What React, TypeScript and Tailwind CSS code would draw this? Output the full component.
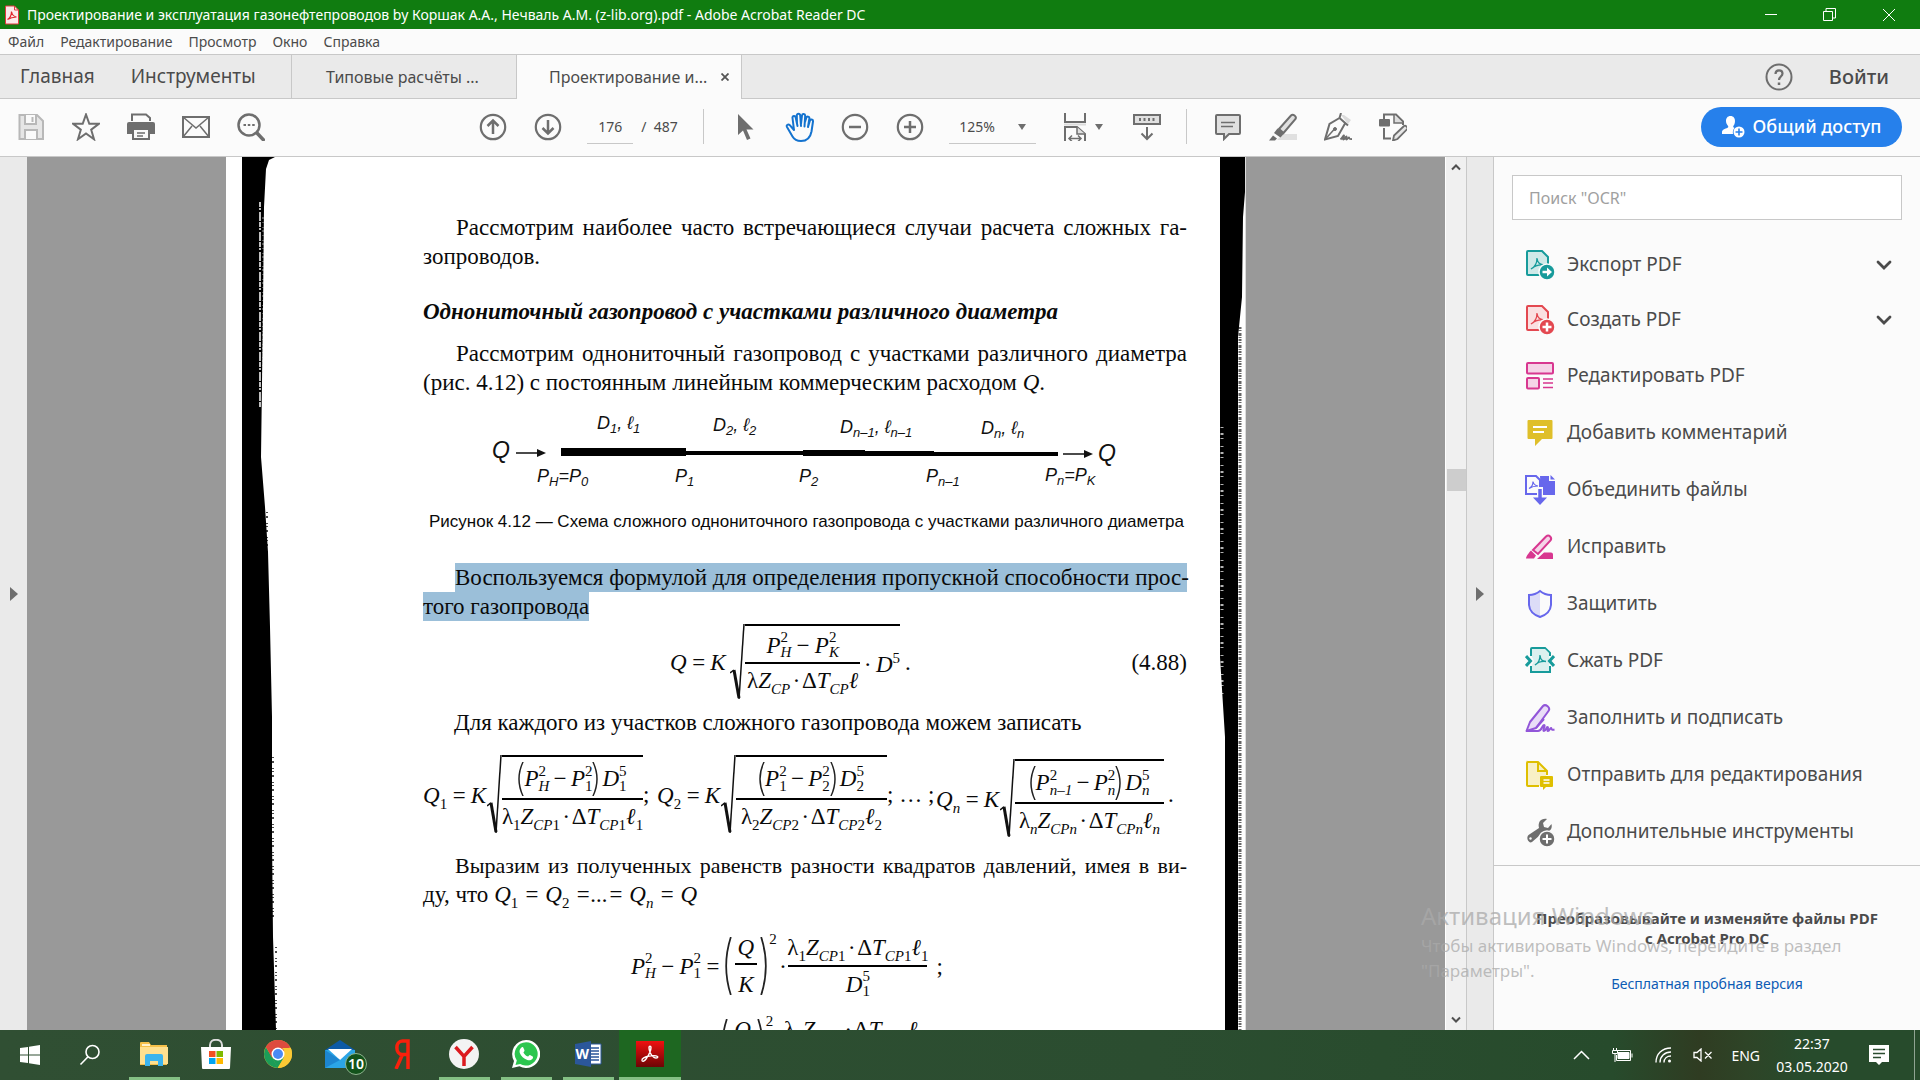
import React from "react";

type Kids = { children?: React.ReactNode };

/* ---------- Toolbar icons (28 x 28) ---------- */

function Ico({ children, size = 28 }: Kids & { size?: number }) {
  return (
    <svg width={size} height={size} viewBox="0 0 28 28" fill="none" stroke="#6e6e6e" strokeWidth="2" aria-hidden="true">
      {children}
    </svg>
  );
}

const SaveIcon = () => (
  <Ico>
    <g stroke="#b8b8b8">
      <path d="M2.500 2H20l6 6v18H2.500z" fill="#e6e6e6" />
      <path d="M8 2v9h11V2" fill="#fafafa" />
      <path d="M15.500 4v5M8 26v-9h12v9" fill="#fafafa" />
    </g>
  </Ico>
);
const StarIcon = () => (
  <Ico>
    <path d="M14 1.500l3.300 9.300h9.500l-7.600 5.900 2.800 9.500L14 20.500l-8 5.700 2.800-9.500-7.600-5.900h9.500z" strokeLinejoin="miter" />
  </Ico>
);
const PrintIcon = () => (
  <Ico>
    <path d="M5 8V1.500h14l4 3.500v3" />
    <path d="M2 9h24a2 2 0 012 2v10H0V11a2 2 0 012-2z" fill="#6e6e6e" stroke="none" />
    <path d="M6 16h16v10H6z" fill="#fafafa" />
    <path d="M10 20h8M10 23h6" strokeWidth="1.500" />
  </Ico>
);
const MailIcon = () => (
  <Ico>
    <path d="M1 4h26v20H1z" />
    <path d="M1 4l13 11L27 4M1 24l9-11M27 24l-9-11" strokeWidth="1.500" />
  </Ico>
);
const FindIcon = () => (
  <Ico>
    <circle cx="12" cy="12" r="10.500" strokeWidth="2.500" />
    <path d="M19.500 19.500L27.500 28" strokeWidth="3.500" />
    <path d="M6.500 12h2.500M10.800 12h2.500M15.200 12h2.500" />
  </Ico>
);
const UpIcon = () => (
  <Ico>
    <circle cx="14" cy="14" r="12.200" strokeWidth="2.200" />
    <path d="M14 21V8M8.500 13L14 7.500l5.500 5.500" strokeWidth="2.500" />
  </Ico>
);
const DownIcon = () => (
  <Ico>
    <circle cx="14" cy="14" r="12.200" strokeWidth="2.200" />
    <path d="M14 7v13M8.500 15l5.500 5.500 5.500-5.500" strokeWidth="2.500" />
  </Ico>
);
const MinusIcon = () => (
  <Ico>
    <circle cx="14" cy="14" r="12.200" strokeWidth="2.200" />
    <path d="M8 14h12" strokeWidth="2.500" />
  </Ico>
);
const PlusIcon = () => (
  <Ico>
    <circle cx="14" cy="14" r="12.200" strokeWidth="2.200" />
    <path d="M8 14h12M14 8v12" strokeWidth="2.500" />
  </Ico>
);
const PointerIcon = () => (
  <Ico>
    <path d="M7 1v21l5-4.500L16 27l3.500-1.500L15.500 16.500h7z" fill="#6e6e6e" stroke="none" />
  </Ico>
);
const HandIcon = () => (
  <svg width="30" height="30" viewBox="0 0 30 30" fill="none" stroke="#1473cf" strokeWidth="2" strokeLinecap="round" strokeLinejoin="round" aria-hidden="true">
    <path d="M9 18L4.800 13.200C3.200 11.500 1 13 2 15l5.500 9.500C9.500 28 12 29 16 29c6.500 0 9.500-4 10.500-9.500L28 9.500c.3-2.300-2.600-2.800-3.200-.6L23 15M9 18L7.500 6c-.3-2.300 2.700-2.700 3.200-.5L12.500 14M12 12l-.2-8.500c0-2.400 3.200-2.400 3.400 0L16 14M16 12l1-8.500c.3-2.200 3.200-2 3.200.3L19.500 14.500M20 10l1.300-4.200c.6-2 3.400-1.400 3.100.7L23 15" />
  </svg>
);
const FitIcon = () => (
  <Ico>
    <path d="M3 11.500h22" stroke="#dcdcdc" />
    <path d="M4 0v9h20V0M4 29V14h12l8 7v8" />
    <path d="M16 14v7h8" fill="#e0e0e0" strokeWidth="1.500" />
    <path d="M8.500 25.500h11M11 22.500l-3 3 3 3M17 22.500l3 3-3 3" strokeWidth="1.500" />
  </Ico>
);
const KeyboardIcon = () => (
  <Ico>
    <path d="M1 2h26v9H1z" fill="#e0e0e0" />
    <path d="M6 6.500h2M10.500 6.500h2M15 6.500h2M19.500 6.500h2" strokeWidth="3" />
    <path d="M14 14v12M8.500 20.500L14 26l5.500-5.500" />
  </Ico>
);
const CommentIcon = () => (
  <Ico>
    <path d="M3 2h22a1 1 0 011 1v17a1 1 0 01-1 1H15l-5 5v-5H3a1 1 0 01-1-1V3a1 1 0 011-1z" fill="#e0e0e0" />
    <path d="M7 9.500h14M7 13.500h12" strokeWidth="1.500" />
  </Ico>
);
const HighlightIcon = () => (
  <Ico>
    <path d="M8 27l6-6h14v6z" fill="#e0e0e0" stroke="none" />
    <path d="M10 16L22 2.500c2-2 6 .8 4.500 3.500L14.500 20z" fill="#e0e0e0" />
    <path d="M8.500 15.500l6.500 5-3.500 4-6.500-4.500z" fill="#6e6e6e" stroke="none" />
    <path d="M4 22.500l4 3-2 2H0z" fill="#6e6e6e" stroke="none" />
  </Ico>
);
const SignIcon = () => (
  <Ico>
    <path d="M17 2l7 9 3-4-7-5z" fill="#dcdcdc" stroke="none" />
    <path d="M17 0l-1.500 5L24 12.500M15.500 5L5.500 11 1 26.500 14 23l7-12.500" />
    <path d="M1.500 26l9-10" strokeWidth="1.500" />
    <circle cx="11" cy="16" r="1.500" fill="#6e6e6e" strokeWidth="1" />
    <path d="M16.500 26.500c2-2 3-4.500 3.500-4 .7.700-2 4-.5 4s2.500-3.500 3-3-1 3 0 3 2-2.500 2.500-2-.5 2 3 1.500" strokeWidth="1.800" />
  </Ico>
);
const EditIcon = () => (
  <Ico>
    <path d="M5 6V1.500h12l7 7V12M5 15v10.500h7" />
    <path d="M15 2v8h9" fill="#dcdcdc" strokeWidth="1.500" />
    <rect x="0" y="6" width="11" height="7.500" rx="1" fill="#6e6e6e" stroke="none" />
    <path d="M14 27.500l1-5 10-9.500c1.500-1.200 4.500 1.500 3 3.300L18.500 26z" fill="#e6e6e6" strokeWidth="1.800" />
  </Ico>
);

const leftTools = [
  { label: "Сохранить", icon: <SaveIcon /> },
  { label: "Избранное", icon: <StarIcon /> },
  { label: "Печать", icon: <PrintIcon /> },
  { label: "Отправить", icon: <MailIcon /> },
  { label: "Найти", icon: <FindIcon /> },
];
const viewTools = [
  { label: "Выделение", icon: <PointerIcon /> },
  { label: "Рука", icon: <HandIcon /> },
  { label: "Уменьшить", icon: <MinusIcon /> },
  { label: "Увеличить", icon: <PlusIcon /> },
];
const markupTools = [
  { label: "Заметка", icon: <CommentIcon /> },
  { label: "Маркер", icon: <HighlightIcon /> },
  { label: "Подпись", icon: <SignIcon /> },
  { label: "Правка", icon: <EditIcon /> },
];

function ToolButton({ label, children }: Kids & { label: string }) {
  return (
    <button type="button" aria-label={label} className="flex h-10 w-[55px] items-center justify-center">
      {children}
    </button>
  );
}

const Caret = () => (
  <svg width="8" height="6" viewBox="0 0 8 6" aria-hidden="true">
    <path d="M0 0h8L4 6z" fill="#6e6e6e" />
  </svg>
);
const Divider = () => <div className="h-[35px] w-px bg-[#c8c8c8]" />;

/* ---------- Window chrome ---------- */

function TitleBar() {
  return (
    <header className="flex h-[29px] shrink-0 items-center bg-[#107c10] text-white">
      <svg width="16" height="20" viewBox="0 0 16 20" className="ml-1 shrink-0" aria-hidden="true">
        <path d="M1.500 1h9l4 4v14h-13z" fill="#fbeaea" stroke="#e0383e" />
        <path d="M10.500 1v4h4" fill="none" stroke="#e0383e" />
        <path d="M3.500 14.500c2.500-1.500 4-5 4-8 .5 3 2 5 5 5.500-3 .2-6 .8-9 2.500z" fill="none" stroke="#e0282e" strokeWidth="1.200" />
      </svg>
      <h1 className="ml-[7px] text-[14px]">
        Проектирование и эксплуатация газонефтепроводов by Коршак А.А., Нечваль А.М. (z-lib.org).pdf - Adobe Acrobat Reader DC
      </h1>
      <div className="ml-auto flex h-full">
        <button type="button" aria-label="Свернуть" className="flex w-[58px] items-center justify-center">
          <svg width="12" height="12" viewBox="0 0 12 12"><path d="M0 5.500h12" stroke="#fff" /></svg>
        </button>
        <button type="button" aria-label="Восстановить" className="flex w-[58px] items-center justify-center">
          <svg width="13" height="13" viewBox="0 0 13 13" fill="none" stroke="#fff"><path d="M.5 3.500h9v9h-9zM3 3.500v-3h9.500v9.500h-3" /></svg>
        </button>
        <button type="button" aria-label="Закрыть" className="flex w-[62px] items-center justify-center">
          <svg width="12" height="12" viewBox="0 0 12 12"><path d="M0 0l12 12M12 0L0 12" stroke="#fff" /></svg>
        </button>
      </div>
    </header>
  );
}

const menus = ["Файл", "Редактирование", "Просмотр", "Окно", "Справка"];

function MenuBar() {
  return (
    <nav className="flex h-[26px] shrink-0 items-center gap-4 border-b border-[#c8c8c8] bg-[#fbfbfb] px-2 text-[14px] text-[#4b4b4b]">
      {menus.map((m) => (
        <button type="button" key={m}>{m}</button>
      ))}
    </nav>
  );
}

function TabBar() {
  return (
    <div className="flex h-11 shrink-0 bg-[#eaeaea] text-[#4b4b4b]">
      <div className="flex w-[292px] items-center gap-9 border-r border-b border-[#c8c8c8] pl-5 text-[19px]">
        <button type="button">Главная</button>
        <button type="button">Инструменты</button>
      </div>
      <button type="button" className="w-[225px] border-r border-b border-[#c8c8c8] pl-[34px] text-left text-[16px]">
        Типовые расчёты ...
      </button>
      <div className="flex w-[225px] items-center justify-between border-r border-[#c8c8c8] bg-[#fbfbfb] pr-3 pl-8 text-[16px]">
        <button type="button">Проектирование и...</button>
        <button type="button" aria-label="Закрыть вкладку">
          <svg width="8" height="8" viewBox="0 0 8 8"><path d="M.5.500l7 7M7.500.500l-7 7" stroke="#555" strokeWidth="1.800" /></svg>
        </button>
      </div>
      <div className="flex flex-1 items-center justify-end border-b border-[#c8c8c8] pr-[31px]">
        <button type="button" aria-label="Справка">
          <svg width="28" height="28" viewBox="0 0 28 28" fill="none" stroke="#6e6e6e" strokeWidth="2">
            <circle cx="14" cy="14" r="12.500" />
            <path d="M10.500 11c0-5 7-4.500 7-.5 0 3-3.500 3-3.500 6.500" strokeWidth="2.200" />
            <path d="M14 19.500v2.500" strokeWidth="2.500" />
          </svg>
        </button>
        <button type="button" className="ml-9 text-[20px] font-medium">Войти</button>
      </div>
    </div>
  );
}

function Toolbar() {
  return (
    <div className="flex h-[58px] shrink-0 items-center border-b border-[#c8c8c8] bg-[#fbfbfb] pr-[18px] pb-[2px] pl-[3px]">
      {leftTools.map((t) => (
        <ToolButton key={t.label} label={t.label}>{t.icon}</ToolButton>
      ))}
      <div className="flex-[2]" />
      <ToolButton label="Предыдущая страница"><UpIcon /></ToolButton>
      <ToolButton label="Следующая страница"><DownIcon /></ToolButton>
      <div className="ml-3 flex items-center gap-2 text-[14px] text-[#4b4b4b]">
        <input aria-label="Номер страницы" defaultValue="176" className="h-[35px] w-[46px] border-b border-[#c8c8c8] bg-transparent text-center outline-none" />
        <span className="w-[62px] whitespace-pre">/  487</span>
      </div>
      <Divider />
      <div className="ml-[13px] flex">
        {viewTools.map((t) => (
          <ToolButton key={t.label} label={t.label}>{t.icon}</ToolButton>
        ))}
      </div>
      <div className="relative ml-3 flex items-center text-[14px] text-[#4b4b4b]">
        <select aria-label="Масштаб" className="h-[35px] w-[87px] appearance-none border-b border-[#c8c8c8] bg-transparent pl-[10px] outline-none">
          <option>125%</option>
        </select>
        <span className="pointer-events-none absolute right-[10px]"><Caret /></span>
      </div>
      <button type="button" aria-label="По ширине" className="ml-[25px] flex h-10 items-center gap-[6px]">
        <FitIcon />
        <Caret />
      </button>
      <span className="w-4" />
      <ToolButton label="Режим чтения"><KeyboardIcon /></ToolButton>
      <span className="w-3" />
      <Divider />
      <div className="ml-[13px] flex">
        {markupTools.map((t) => (
          <ToolButton key={t.label} label={t.label}>{t.icon}</ToolButton>
        ))}
      </div>
      <div className="flex-[3]" />
      <button type="button" className="flex h-10 w-[201px] items-center justify-center gap-2 rounded-full bg-[#2680eb] text-[18px] font-medium text-white">
        <svg width="23" height="23" viewBox="0 0 23 23" fill="#fff" aria-hidden="true">
          <path d="M8.500 1c3 0 4.500 2.300 4.500 5s-1 4-1.700 5c-.3 1 .2 1.500 1.200 1.900-1.500 1.600-2 3.600-1.500 6.100H0v-2c0-3 5-3.500 6-4.500.5-.5.3-1-.1-1.700C5 9.500 4 8 4 6c0-2.700 1.500-5 4.500-5z" />
          <path fillRule="evenodd" d="M17 11.500a5.500 5.500 0 110 11 5.500 5.500 0 010-11zm-.8 2v2.700h-2.700v1.600h2.700v2.700h1.600v-2.700h2.700v-1.600h-2.700v-2.700z" />
        </svg>
        Общий доступ
      </button>
    </div>
  );
}

/* ---------- Formula building blocks ---------- */

/* Digits in an index stay upright, letters follow the italic of the formula. */
const indexStyle = (s: string) => (/^\d$/.test(s) ? "not-italic" : "italic");

function Sub({ children }: { children: string }) {
  return (
    <span className="align-[-6px] text-[15px]">
      {children.split(/(\d)/).map((part, i) => (
        <span key={i} className={indexStyle(part)}>{part}</span>
      ))}
    </span>
  );
}

/* A base letter with an upper and a lower index stacked after it. */
function Idx({ base, up, low }: { base: string; up: string; low: string }) {
  return (
    <span className="inline-flex items-center">
      {base}
      <span className="flex flex-col text-[15px] leading-[15px]">
        <span className="not-italic">{up}</span>
        <span className={indexStyle(low)}>{low}</span>
      </span>
    </span>
  );
}

function Frac({ top, bottom, className }: { top: React.ReactNode; bottom: React.ReactNode; className: string }) {
  return (
    <div className={className}>
      <div className="flex h-[36px] items-center justify-center border-b-2 border-black">{top}</div>
      <div className="flex h-[34px] items-center justify-center whitespace-nowrap">{bottom}</div>
    </div>
  );
}

function Root({ children, className }: Kids & { className: string }) {
  return (
    <div className="flex items-stretch">
      <svg className="h-auto w-[15px]" viewBox="0 0 15 76" preserveAspectRatio="none" fill="none" stroke="#111" aria-hidden="true">
        <path d="M0 49l4-3" strokeWidth="1.500" />
        <path d="M4 46l5 28" strokeWidth="3" />
        <path d="M9 75L14 0" strokeWidth="1.500" />
      </svg>
      <div className={className}>{children}</div>
    </div>
  );
}

const Paren = ({ right, className }: { right?: boolean; className: string }) => (
  <svg className={className} viewBox="0 0 6 60" preserveAspectRatio="none" fill="none" stroke="#222" strokeWidth="1.500" aria-hidden="true">
    <path d={right ? "M1 0Q9 30 1 60" : "M5 0Q-3 30 5 60"} />
  </svg>
);

function Denominator({ n }: { n: string }) {
  return (
    <span className="pt-1">
      <span className="not-italic">λ</span><Sub>{n}</Sub>Z<Sub>{"CP" + n}</Sub>
      <span className="mx-[3px]">·</span>
      <span className="not-italic">Δ</span>T<Sub>{"CP" + n}</Sub>ℓ<Sub>{n}</Sub>
    </span>
  );
}

function Flow({ n, from, to, width }: { n: string; from: string; to: string; width: string }) {
  return (
    <div className="flex items-center">
      <span className="w-[64px] pt-2 whitespace-nowrap">
        Q<Sub>{n}</Sub><span className="mx-1">=</span>K
      </span>
      <Root className="border-t-2 border-black pt-[7px]">
        <Frac
          className={width}
          top={
            <span className="flex items-center pb-1">
              <Paren className="h-[34px] w-[6px]" />
              <Idx base="P" up="2" low={from} />
              <span className="mx-[3px]">−</span>
              <Idx base="P" up="2" low={to} />
              <Paren right className="mr-1 h-[34px] w-[6px]" />
              <Idx base="D" up="5" low={n} />
            </span>
          }
          bottom={<Denominator n={n} />}
        />
      </Root>
    </div>
  );
}

function Difference({ n, from, to }: { n: string; from: string; to: string }) {
  return (
    <div className="ml-[208px] flex h-[82px] items-center text-[23px] leading-none italic">
      <Idx base="P" up="2" low={from} />
      <span className="mx-1">−</span>
      <Idx base="P" up="2" low={to} />
      <span className="mx-1">=</span>
      <Paren className="h-[58px] w-[7px]" />
      <span className="flex flex-col items-center px-[3px]">
        <span className="border-b-2 border-black px-[3px] pb-1">Q</span>
        <span className="pt-2">K</span>
      </span>
      <Paren right className="h-[58px] w-[7px]" />
      <span className="mb-[54px] ml-[2px] text-[15px] leading-none not-italic">2</span>
      <span className="mx-[3px]">·</span>
      <Frac className="w-[139px]" top={<Denominator n={n} />} bottom={<Idx base="D" up="5" low={n} />} />
      <span className="ml-[9px] not-italic">;</span>
    </div>
  );
}

/* ---------- Pipeline diagram ---------- */

const S = ({ children }: Kids) => <tspan fontSize="13" dy="4">{children}</tspan>;
const U = ({ children }: Kids) => <tspan dy="-4">{children}</tspan>;

function PipelineDiagram() {
  return (
    <svg viewBox="0 0 764 115" className="block w-full" fill="#111" fontFamily="Liberation Sans, Arial, sans-serif" fontStyle="italic" fontSize="18">
      <text x="174" y="32">D<S>1</S><U>, ℓ</U><S>1</S></text>
      <text x="290" y="34">D<S>2</S><U>, ℓ</U><S>2</S></text>
      <text x="417" y="36">D<S>n–1</S><U>, ℓ</U><S>n–1</S></text>
      <text x="558" y="37">D<S>n</S><U>, ℓ</U><S>n</S></text>
      <text x="69" y="61" fontSize="23">Q</text>
      <text x="675" y="64" fontSize="23">Q</text>
      <path d="M93 56h24M640 57h24" stroke="#111" strokeWidth="1.500" />
      <path d="M114 52l9 4-9 4zM661 53l9 4-9 4z" />
      <path d="M138 51h125v8H138zM263 54h120v4H263zM380 53h62v6h-62zM442 54h69v5h-69zM511 55h124v4H511z" fill="#000" />
      <text x="114" y="85">P<S>H</S><U>=P</U><S>0</S></text>
      <text x="252" y="85">P<S>1</S></text>
      <text x="376" y="85">P<S>2</S></text>
      <text x="503" y="85">P<S>n–1</S></text>
      <text x="622" y="84">P<S>n</S><U>=P</U><S>K</S></text>
    </svg>
  );
}

/* ---------- Document ---------- */

const Line = ({ children, indent }: Kids & { indent?: boolean }) => (
  <span className={indent ? "block whitespace-nowrap pl-[33px] [text-align-last:justify]" : "block"}>{children}</span>
);

function LeftScanEdge() {
  return (
    <svg width="40" height="873" viewBox="0 0 40 873" className="ml-4 shrink-0" aria-hidden="true">
      <path d="M0 0H33L27 3 24 12 22 50 21 150 19 300 23 350 26 395 28 470 30 560 30 680 31 780 34 873H0z" fill="#000" />
      <path d="M18 45V250" stroke="#fff" strokeWidth="2" strokeDasharray="5 1 2 2 9 1" opacity=".75" />
      <path d="M21 60V300" stroke="#fff" strokeWidth="1" strokeDasharray="2 3 1 4 1 2" opacity=".6" />
      <path d="M25 355V465M31 600V760M34 790V873" stroke="#000" strokeWidth="2" strokeDasharray="1 3 2 5 1 2" opacity=".7" />
    </svg>
  );
}

function RightScanEdge() {
  return (
    <svg width="28" height="873" viewBox="0 0 28 873" className="shrink-0" aria-hidden="true">
      <path d="M1 0H27V35L25 60 24 140 20 180V873H7V580L2 500V0z" fill="#000" />
      <path d="M22 170V873" stroke="#000" strokeWidth="3" strokeDasharray="2 1 1 2 3 1 1 1" opacity=".6" />
      <path d="M4 270V540" stroke="#fff" strokeWidth="3" strokeDasharray="1 5 2 3 1 7" opacity=".7" />
      <path d="M27.500 0V873" stroke="#ddd" />
    </svg>
  );
}

function DocumentPage() {
  return (
    <article className="flex w-[1020px] bg-white">
      <LeftScanEdge />
      <div className="ml-[141px] min-w-0 flex-1 pt-[56px] pr-[31px] font-['Liberation_Serif','Times_New_Roman',serif] text-[23px] leading-[29px] text-[#0a0a0a]">
        <p>
          <Line indent>Рассмотрим наиболее часто встречающиеся случаи расчета сложных га-</Line>
          <Line>зопроводов.</Line>
        </p>
        <h2 className="mt-[26px] font-bold whitespace-nowrap italic">Однониточный газопровод с участками различного диаметра</h2>
        <p className="mt-[13px]">
          <Line indent>Рассмотрим однониточный газопровод с участками различного диаметра</Line>
          <Line>(рис. 4.12) с постоянным линейным коммерческим расходом <i>Q</i>.</Line>
        </p>
        <PipelineDiagram />
        <p className="pl-[6px] font-['Liberation_Sans',Arial,sans-serif] text-[17px] leading-5 whitespace-nowrap">
          Рисунок 4.12 — Схема сложного однониточного газопровода с участками различного диаметра
        </p>
        <p className="mt-[31px]">
          <span className="ml-[32px] block bg-[#9bbfd9] whitespace-nowrap [text-align-last:justify]">Воспользуемся формулой для определения пропускной способности прос-</span>
          <span className="inline-block bg-[#9bbfd9]">того газопровода</span>
        </p>
        <div className="mt-[5px] flex h-[72px] items-center text-[23px] leading-none italic">
          <span className="ml-[247px] w-[60px] whitespace-nowrap">Q<span className="mx-1">=</span>K</span>
          <Root className="flex w-[155px] items-center border-t-2 border-black">
            <Frac
              className="w-[116px]"
              top={
                <span className="flex items-center">
                  <Idx base="P" up="2" low="H" />
                  <span className="mx-1">−</span>
                  <Idx base="P" up="2" low="K" />
                </span>
              }
              bottom={<Denominator n="" />}
            />
            <span className="ml-1 whitespace-nowrap">
              · D<span className="align-[9px] text-[15px] not-italic">5</span>
            </span>
          </Root>
          <span className="ml-[5px] not-italic">.</span>
          <span className="ml-auto not-italic">(4.88)</span>
        </div>
        <p className="mt-[10px] pl-[31px]">Для каждого из участков сложного газопровода можем записать</p>
        <div className="mt-[17px] flex h-[80px] items-center text-[23px] leading-none whitespace-nowrap italic">
          <Flow n="1" from="H" to="1" width="w-[141px]" />
          <span className="w-[14px] not-italic">;</span>
          <Flow n="2" from="1" to="2" width="w-[151px]" />
          <span className="w-[49px] not-italic">; … ;</span>
          <div className="pt-2">
            <Flow n="n" from="n–1" to="n" width="w-[149px]" />
          </div>
          <span className="ml-1 not-italic">.</span>
        </div>
        <div className="mt-[17px]">
          <p className="pl-8 text-[22px] whitespace-nowrap [text-align-last:justify]">
            Выразим из полученных равенств разности квадратов давлений, имея в ви-
          </p>
          <p className="flex items-baseline">
            ду, что
            <i className="ml-[6px] leading-none">
              Q<Sub>1</Sub> = Q<Sub>2</Sub> =...= Q<Sub>n</Sub> = Q
            </i>
          </p>
        </div>
        <div className="mt-[14px]">
          <Difference n="1" from="H" to="1" />
          <Difference n="2" from="1" to="2" />
        </div>
      </div>
      <RightScanEdge />
    </article>
  );
}

function Viewer() {
  return (
    <main className="flex min-w-0 flex-1">
      <button type="button" aria-label="Показать панель навигации" className="flex w-[27px] items-center justify-center bg-[#eaeaea]">
        <svg width="8" height="14" viewBox="0 0 8 14"><path d="M0 0l8 7-8 7z" fill="#6e6e6e" /></svg>
      </button>
      <div className="flex flex-1 justify-center overflow-hidden bg-[#999]">
        <DocumentPage />
      </div>
      <div className="flex w-[22px] flex-col items-center border-r border-l border-r-[#c8c8c8] border-l-white bg-[#f0f0f0] py-[6px]">
        <svg width="10" height="8" viewBox="0 0 10 8" fill="none" stroke="#505050" strokeWidth="2"><path d="M1 6.500L5 2.500l4 4" /></svg>
        <div className="mt-[298px] h-[22px] w-[19px] bg-[#cdcdcd]" />
        <svg className="mt-auto" width="10" height="8" viewBox="0 0 10 8" fill="none" stroke="#505050" strokeWidth="2"><path d="M1 1.500l4 4 4-4" /></svg>
      </div>
      <button type="button" aria-label="Скрыть панель инструментов" className="flex w-[27px] items-center justify-center border-r border-[#c8c8c8] bg-[#eaeaea]">
        <svg width="8" height="14" viewBox="0 0 8 14"><path d="M0 0l8 7-8 7z" fill="#6e6e6e" /></svg>
      </button>
    </main>
  );
}

/* ---------- Side panel icons (30 x 30) ---------- */

function PIco({ children, color }: Kids & { color: string }) {
  return (
    <svg width="30" height="30" viewBox="0 0 30 30" fill="none" stroke={color} strokeWidth="2" aria-hidden="true">
      {children}
    </svg>
  );
}
const Sheet = ({ tint }: { tint: string }) => (
  <>
    <path d="M3 1h14l6 6v17a1 1 0 01-1 1H3a1 1 0 01-1-1V2a1 1 0 011-1z" fill={tint} />
    <path d="M6 19c4-2 6-6 6-11 .5 5 2.500 6 6.500 7-5-.5-9 1-12.500 4z" strokeWidth="1.300" />
  </>
);
const ExportIcon = () => (
  <PIco color="#179b9b">
    <Sheet tint="#cfe9e8" />
    <circle cx="22" cy="22" r="8" fill="#179b9b" stroke="#fbfbfb" strokeWidth="1.500" />
    <path d="M17.500 22h6" stroke="#fff" strokeWidth="2.500" />
    <path d="M22 17.500l5 4.500-5 4.500z" fill="#fff" stroke="none" />
  </PIco>
);
const CreateIcon = () => (
  <PIco color="#e34850">
    <Sheet tint="#fae0e1" />
    <circle cx="22" cy="22" r="8" fill="#e34850" stroke="#fbfbfb" strokeWidth="1.500" />
    <path d="M17.500 22h9M22 17.500v9" stroke="#fff" strokeWidth="2.500" />
  </PIco>
);
const LayoutIcon = () => (
  <PIco color="#d83790">
    <rect x="2" y="2" width="26" height="10.500" rx="1" fill="#f5d3e7" />
    <rect x="2" y="17" width="12" height="10.500" rx="1" fill="#f5d3e7" />
    <path d="M18 18h10M18 22h10M18 26.500h10" strokeWidth="1.300" />
  </PIco>
);
const NoteIcon = () => (
  <PIco color="#dfbf2a">
    <path d="M3.500 2h23a1 1 0 011 1v17a1 1 0 01-1 1H17l-7 7v-7H3.500a1 1 0 01-1-1V3a1 1 0 011-1z" fill="#dfbf2a" stroke="none" />
    <path d="M8 9h14M8 14h11" stroke="#fff" />
  </PIco>
);
const CombineIcon = () => (
  <PIco color="#6767ec">
    <path d="M15 1h9v5h6v14H16z" fill="#6767ec" stroke="none" />
    <path d="M25.500 0v4.500H30z" fill="#6767ec" stroke="none" />
    <path d="M1 1h10l4 4v14H1z" fill="#fbfbfb" />
    <path d="M4 13.500c3-1.500 4-4 4-7 .5 3 2 4 5 4.500-4 0-6 .5-9 2.500z" strokeWidth="1.200" />
    <path d="M15 12v12" stroke="#fbfbfb" strokeWidth="6" />
    <path d="M15 14v11" strokeWidth="3.500" />
    <path d="M8 22.500h14L15 30z" fill="#6767ec" stroke="none" />
  </PIco>
);
const RedactIcon = () => (
  <PIco color="#d83790">
    <path d="M8 18L21 4.500c3-2.500 6.500 1 4.500 4L13 22z" fill="#f5d3e7" />
    <path d="M6 18.500l5 5-2 3H1c0-2 3-6 5-8zM12 27l7-6.500h7a2 2 0 012 2V27z" fill="#d83790" stroke="none" />
  </PIco>
);
const ShieldIcon = () => (
  <PIco color="#6767ec">
    <path d="M15 2v26C9 26 5 22 4.500 16V6c4 0 7-1 10.500-4z" fill="#dcdcf7" stroke="none" />
    <path d="M15 2c3 2.500 7 4 11 4v10c-.5 6-5 10-11 12C9 26 4.500 22 4 16V6c4 0 8-1.500 11-4z" />
  </PIco>
);
const CompressIcon = () => (
  <PIco color="#179b9b">
    <path d="M6 10V3a1 1 0 011-1h13l5 5v3M6 20v6h19v-6" />
    <path d="M7 3h13l4 4v18H7V19l2-4-2-4z" fill="#dcf0ef" stroke="none" />
    <path d="M10 19c4-2 5-5 5-10 .5 5 2 6 6 6.500-5-.5-8 .5-11 3.500z" strokeWidth="1.300" />
    <path d="M1 10l4.500 5L1 20M29 10l-4.500 5 4.500 5" strokeWidth="3" />
  </PIco>
);
const FillSignIcon = () => (
  <PIco color="#9256d9">
    <path d="M5 19L18 3c2.500-2.500 8 1.500 5.500 5L11 25l-9.500 3z" fill="#e9ddf7" strokeLinejoin="round" />
    <path d="M1 28h12c4 0 4-6 6-6s-2 6 0 6 2-4 3.500-4-1 4 .5 4 2-3 3-3-.5 2.500 3.500 1.500M11 25l8-9" />
  </PIco>
);
const SendIcon = () => (
  <PIco color="#dfbf00">
    <path d="M3 1h9l9 9v6h-6v10H2a1 1 0 01-1-1V2a1 1 0 012-1z" fill="#f8f0c6" stroke="none" />
    <path d="M14 26H3a1 1 0 01-1-1V3a1 1 0 011-1h10l9 9v4M13 3v8h8" />
    <path d="M16 16h11a1 1 0 011 1v9a1 1 0 01-1 1h-6l-3 3v-3h-2a1 1 0 01-1-1v-9a1 1 0 011-1z" fill="#dfbf00" stroke="none" />
    <path d="M18.500 20h6M18.500 23h6" stroke="#fff" strokeWidth="1.500" />
  </PIco>
);
const WrenchIcon = () => (
  <PIco color="#6e6e6e">
    <path d="M3.500 18L14 11C12.500 5 16 1 22 2l-4 4 1 4 4 1 3.500-4C28 13 23 16 18 15.500L7 25c-3 2-6.500-4-3.500-7z" fill="#6e6e6e" stroke="none" />
    <circle cx="5.500" cy="21.500" r="1.200" fill="#fbfbfb" stroke="none" />
    <circle cx="22" cy="22" r="8" fill="#6e6e6e" stroke="#fbfbfb" strokeWidth="1.500" />
    <path d="M17.500 22h9M22 17.500v9" stroke="#fff" />
  </PIco>
);

const tools = [
  { label: "Экспорт PDF", icon: <ExportIcon />, more: true },
  { label: "Создать PDF", icon: <CreateIcon />, more: true },
  { label: "Редактировать PDF", icon: <LayoutIcon /> },
  { label: "Добавить комментарий", icon: <NoteIcon /> },
  { label: "Объединить файлы", icon: <CombineIcon /> },
  { label: "Исправить", icon: <RedactIcon /> },
  { label: "Защитить", icon: <ShieldIcon /> },
  { label: "Сжать PDF", icon: <CompressIcon /> },
  { label: "Заполнить и подписать", icon: <FillSignIcon /> },
  { label: "Отправить для редактирования", icon: <SendIcon /> },
  { label: "Дополнительные инструменты", icon: <WrenchIcon /> },
];

function SidePanel() {
  return (
    <aside className="w-[426px] shrink-0 bg-[#fbfbfb] pt-[18px] text-[#4b4b4b]">
      <div className="px-[18px]">
        <input
          aria-label="Поиск инструментов"
          placeholder={'Поиск "OCR"'}
          className="h-[45px] w-full border border-[#c8c8c8] bg-white px-4 text-[16px] outline-none placeholder:text-[#a0a0a0]"
        />
        <ul className="mt-[17px]">
          {tools.map((t) => (
            <li key={t.label}>
              <button type="button" className={t.more ? "flex h-[55px] w-full items-center gap-3 pr-[10px] pl-[13px] text-left text-[19px]" : "flex h-[57px] w-full items-center gap-3 pl-[13px] text-left text-[19px]"}>
                {t.icon}
                {t.label}
                {t.more && (
                  <svg className="ml-auto" width="16" height="10" viewBox="0 0 16 10" fill="none" stroke="#4b4b4b" strokeWidth="2.800" strokeLinecap="round">
                    <path d="M2 2l6 6 6-6" />
                  </svg>
                )}
              </button>
            </li>
          ))}
        </ul>
      </div>
      <div className="mt-[5px] border-t border-[#c8c8c8] pt-[42px] text-center text-[14px]">
        <p className="text-[15px] font-bold leading-5">
          Преобразовывайте и изменяйте файлы PDF
          <br />с Acrobat Pro DC
        </p>
        <a href="#trial" className="mt-[26px] inline-block leading-5 text-[#0d5cb5]">Бесплатная пробная версия</a>
      </div>
    </aside>
  );
}

/* ---------- Taskbar ---------- */

const ExplorerIcon = () => (
  <svg width="28" height="26" viewBox="0 0 28 26" aria-hidden="true">
    <path d="M0 2a1 1 0 011-1h8l2 3h16v20H0z" fill="#f5c04a" />
    <path d="M2 3h8v2H2z" fill="#fff2cc" />
    <path d="M0 6h28v17H0z" fill="#ffe08f" />
    <path d="M5 15a2 2 0 012-2h14a2 2 0 012 2v10h-5v-5h-8v5H5z" fill="#3bb4ee" />
  </svg>
);
const StoreIcon = () => (
  <svg width="30" height="30" viewBox="0 0 30 30" aria-hidden="true">
    <path d="M9 9V6c0-7 12-7 12 0v3" fill="none" stroke="#ddd" strokeWidth="2" />
    <path d="M0 8h30l-1 21a1 1 0 01-1 1H2a1 1 0 01-1-1z" fill="#fff" />
    <path d="M8 12h6.500v6H8z" fill="#f25022" />
    <path d="M15.500 12H22v6h-6.500z" fill="#7fba00" />
    <path d="M8 19h6.500v6H8z" fill="#00a4ef" />
    <path d="M15.500 19H22v6h-6.500z" fill="#ffb900" />
  </svg>
);
const ChromeIcon = () => (
  <svg width="28" height="28" viewBox="0 0 28 28" aria-hidden="true">
    <circle cx="14" cy="14" r="14" fill="#fbc934" />
    <path d="M14 14L1.900 7A14 14 0 0126.100 7z" fill="#dd4b3e" />
    <path d="M1.900 7L8.500 18 14 28A14 14 0 011.900 7z" fill="#1c9d58" />
    <path d="M14 7.500h12.500L26.100 7A14 14 0 0014 0C9 0 4.500 2.500 1.900 7l6 10.500z" fill="#dd4b3e" />
    <path d="M8 17.500L13.500 28 20 17.500z" fill="#1c9d58" />
    <path d="M14 28L20 17.500A7 7 0 0018 8h8.700A14 14 0 0114 28z" fill="#fbc934" />
    <circle cx="14" cy="14" r="6.500" fill="#fff" />
    <circle cx="14" cy="14" r="5" fill="#4a8af4" />
  </svg>
);
const YandexIcon = () => (
  <svg width="30" height="30" viewBox="0 0 30 30" aria-hidden="true">
    <circle cx="15" cy="15" r="15" fill="#f3f3f3" />
    <path d="M6.500 8l8.500 9.500L23.500 8M15 17v10" fill="none" stroke="#dc1a1f" strokeWidth="3.500" />
  </svg>
);
const WhatsAppIcon = () => (
  <svg width="28" height="28" viewBox="0 0 28 28" aria-hidden="true">
    <path d="M14 0a14 14 0 11-6.500 26.300L0 28l2-7A14 14 0 0114 0z" fill="#fff" />
    <path d="M14.200 2.300a11.600 11.600 0 11-6 21.600L3.500 25l1.300-4.500a11.600 11.600 0 019.400-18.200z" fill="#2cc64f" />
    <path d="M9.500 7.500c1-.8 1.600-.5 2 .5l1 2.300c.2.800-.8 1.500-1.100 2.100 1 2 2.500 3.300 4.600 4.200.8-.4 1.300-1.700 2-1.500l2.700 1.300c.6.400.3 1.900-.4 2.700-1.300 1.300-3.200 1.500-5 .9-3.600-1.200-6.200-3.700-7.500-7-.6-2-.2-4.200 1.700-5.500z" fill="#fff" />
  </svg>
);
const AcrobatIcon = () => (
  <svg width="28" height="28" viewBox="0 0 28 28" aria-hidden="true">
    <defs>
      <linearGradient id="acro" x1="0" y1="0" x2="0" y2="1">
        <stop offset="0" stopColor="#f01010" />
        <stop offset="1" stopColor="#6d0505" />
      </linearGradient>
    </defs>
    <path d="M0 1h28v26H0z" fill="url(#acro)" />
    <path d="M6 20.500c-.5-2 3-3.500 6-4.200 4-.8 8-1 9.500.2 1 1.300-1.500 2-3.500.8-3.500-2-5-7-5-9.800 0-1.700 2-1.700 2 0 0 3-2.500 8-5 11.500-1.500 2-3.500 3-4 1.500z" fill="none" stroke="#fff" strokeWidth="1.400" />
  </svg>
);

function TaskButton({ children, label, active, open }: Kids & { label: string; active?: boolean; open?: boolean }) {
  return (
    <button
      type="button"
      aria-label={label}
      className={active ? "flex w-[62px] flex-col items-center bg-[#1e6721]" : "flex w-[62px] flex-col items-center"}
    >
      <span className="flex flex-1 items-center">{children}</span>
      <span className={active ? "h-[3px] w-full bg-[#84c084]" : open ? "h-[3px] w-[51px] bg-[#84c084]" : "h-[3px]"} />
    </button>
  );
}

function Taskbar() {
  return (
    <footer className="flex h-[50px] shrink-0 bg-[linear-gradient(90deg,#304f33_0%,#2b4d30_60%,#274b2c_84%,#2f3c22_88.500%,#2e4427_91%,#274b2c_94%)] text-white">
      <button type="button" aria-label="Пуск" className="flex w-[60px] items-center justify-center">
        <svg width="20" height="20" viewBox="0 0 20 20" fill="#fff"><path d="M0 3l8-1.100v7.600H0zM9 1.700L20 0v9.500H9zM0 10.500h8v7.600L0 17zM9 10.500h11V20L9 18.300z" /></svg>
      </button>
      <button type="button" aria-label="Поиск" className="mr-[3px] flex w-[60px] items-center justify-center">
        <svg width="22" height="22" viewBox="0 0 22 22" fill="none" stroke="#fff" strokeWidth="1.600"><circle cx="13.500" cy="8" r="6.500" /><path d="M9 12.800L1.500 20.500" /></svg>
      </button>
      <TaskButton label="Проводник" open><ExplorerIcon /></TaskButton>
      <TaskButton label="Магазин"><StoreIcon /></TaskButton>
      <TaskButton label="Chrome"><ChromeIcon /></TaskButton>
      <TaskButton label="Почта">
        <span className="relative">
          <svg width="30" height="28" viewBox="0 0 30 28" aria-hidden="true">
            <path d="M0 10L15 0l15 10z" fill="#0c5aa6" />
            <path d="M0 10h30v18H0z" fill="#2ba5e6" />
            <path d="M3 9h24L15 20z" fill="#fff" />
            <path d="M0 10l15 10L0 28z" fill="#1d86d0" />
          </svg>
          <span className="absolute top-[13px] left-[20px] flex size-[22px] items-center justify-center rounded-full border border-[#8fb58f] bg-[#12521b] text-[14px] font-semibold">10</span>
        </span>
      </TaskButton>
      <TaskButton label="Яндекс">
        <svg width="16" height="30" viewBox="0 0 16 30" fill="none" stroke="#f8200c" strokeWidth="3.500" aria-hidden="true">
          <path d="M14 30V2H8.500C1 2 1 15.500 8.500 15.500H14M8.500 15.500L2 30" />
        </svg>
      </TaskButton>
      <TaskButton label="Яндекс.Браузер" open><YandexIcon /></TaskButton>
      <TaskButton label="WhatsApp" open><WhatsAppIcon /></TaskButton>
      <TaskButton label="Word" open>
        <span className="relative flex">
          <svg width="27" height="26" viewBox="0 0 27 26" aria-hidden="true">
            <path d="M14 3h12v20H14z" fill="#fff" stroke="#2b579a" />
            <path d="M16 7h8M16 10h8M16 13h8M16 16h8M16 19h8" stroke="#2b579a" strokeWidth="1.500" />
            <path d="M0 3l16-3v26L0 23z" fill="#2b579a" />
          </svg>
          <span className="absolute inset-y-0 left-px flex items-center text-[14px] font-bold">W</span>
        </span>
      </TaskButton>
      <TaskButton label="Acrobat Reader" active><AcrobatIcon /></TaskButton>

      <div className="ml-auto flex items-center">
        <button type="button" aria-label="Показать скрытые значки" className="mr-[22px]">
          <svg width="17" height="10" viewBox="0 0 17 10" fill="none" stroke="#fff" strokeWidth="1.500"><path d="M1 9l7.500-7.500L16 9" /></svg>
        </button>
        <svg className="mr-[22px]" width="21" height="14" viewBox="0 0 21 14" fill="none" stroke="#fff" aria-hidden="true">
          <path d="M5 2.500h13.500v10H4.500V7" />
          <path d="M6 4.500h11v6H6z" fill="#fff" />
          <path d="M20 5.500v4M1.500 0v3M4.500 0v3M3 6v8" />
          <path d="M.5 2.500h5v3h-5z" fill="#2b4d30" />
        </svg>
        <svg className="mr-[21px]" width="17" height="16" viewBox="0 0 17 16" fill="none" stroke="#fff" strokeWidth="1.400" aria-hidden="true">
          <path d="M1 15.500C1 7 7 1 16 1M5 15.500C5 9.500 9.500 5 16 5M9 15.500C9 11.500 12 9 16 9" />
          <circle cx="14.500" cy="14" r="1.500" fill="#fff" stroke="none" />
        </svg>
        <svg className="mr-[18px]" width="20" height="14" viewBox="0 0 20 14" fill="none" stroke="#fff" strokeWidth="1.300" aria-hidden="true">
          <path d="M1 4.500h3L8 1v12L4 9.500H1zM12 4l6.500 6.500M18.500 4L12 10.500" />
        </svg>
        <span className="text-[14px]">ENG</span>
        <span className="ml-[17px] flex w-[70px] flex-col items-center text-[14px] leading-[23px]">
          <span>22:37</span>
          <span>03.05.2020</span>
        </span>
        <button type="button" aria-label="Уведомления" className="ml-[22px]">
          <svg width="20" height="20" viewBox="0 0 20 20"><path d="M0 0h20v17h-7l-3 3-3-3H0z" fill="#fff" /><path d="M4 4.500h12M4 8.500h12M4 12.500h8" stroke="#2b4d30" strokeWidth="1.300" /></svg>
        </button>
        <div className="ml-[25px] h-[50px] w-[6px] border-l border-[#8fa392]" />
      </div>
    </footer>
  );
}

export default function App() {
  return (
    <div className="relative flex h-screen flex-col overflow-hidden font-['Noto_Sans','Open_Sans',sans-serif]">
      <TitleBar />
      <MenuBar />
      <TabBar />
      <Toolbar />
      <div className="flex min-h-0 flex-1 overflow-hidden">
        <Viewer />
        <SidePanel />
      </div>
      <Taskbar />
      <div className="pointer-events-none absolute right-[80px] bottom-[97px] w-[419px] text-[#aaaaaa]/75">
        <p className="text-[24px] leading-[34px]">Активация Windows</p>
        <p className="text-[17px] leading-[25px] whitespace-nowrap">
          Чтобы активировать Windows, перейдите в раздел
          <br />
          "Параметры".
        </p>
      </div>
    </div>
  );
}
